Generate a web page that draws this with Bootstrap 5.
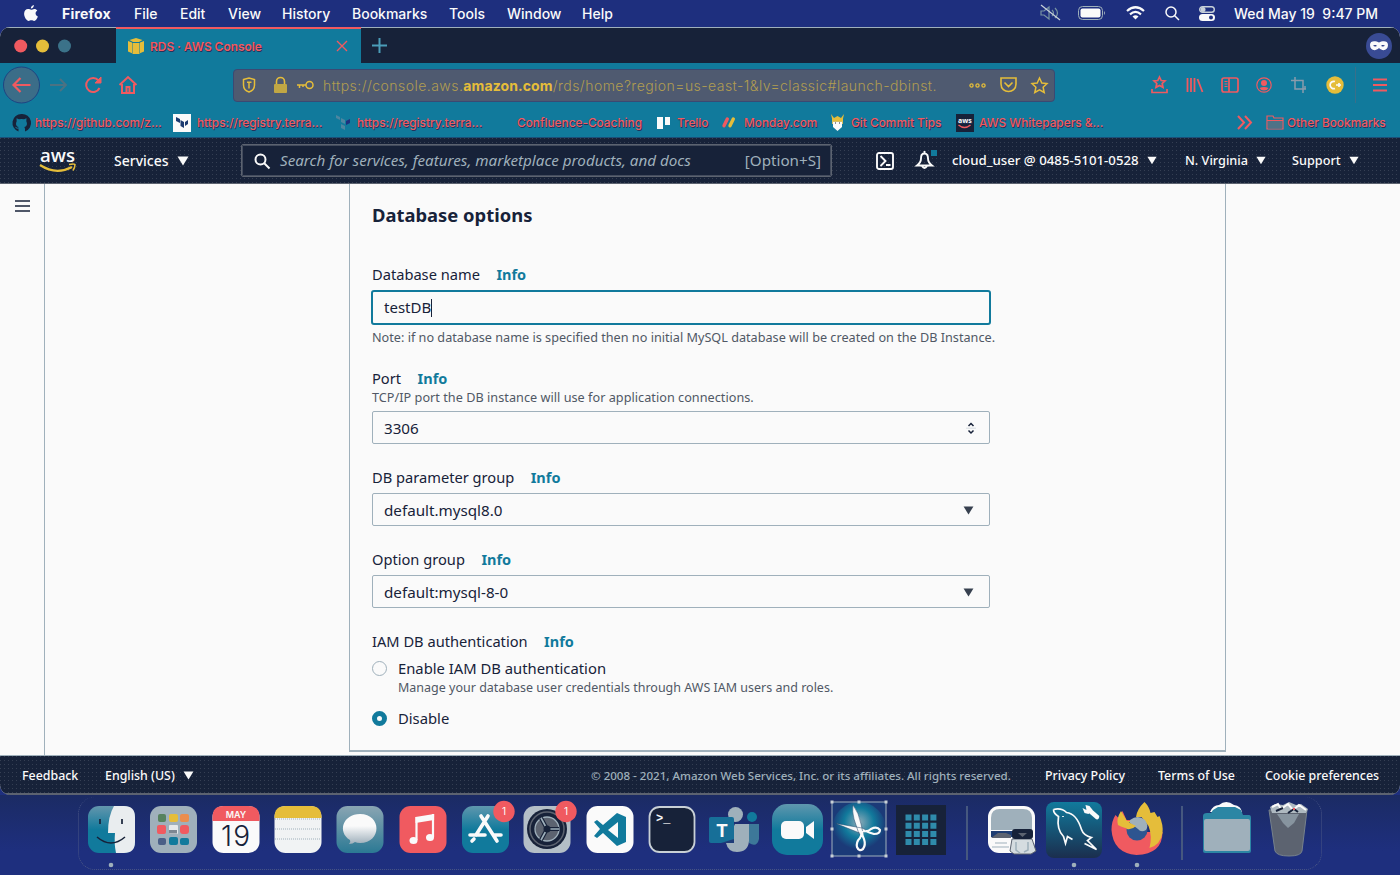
<!DOCTYPE html>
<html lang="en">
<head>
<meta charset="utf-8">
<title>RDS · AWS Console</title>
<link href="https://cdn.jsdelivr.net/npm/bootstrap@5.3.0/dist/css/bootstrap.min.css" rel="stylesheet">
<style>
:root{--ink:#172239;--blue:#1e2f7e;--teal:#117a9c;--red:#f05a60;--gold:#e5bd3a;--slate:#5c6370;--mist:#9fb0bb;--paper:#fafafa}
body{width:1400px;height:875px;overflow:hidden;background:var(--blue);font-family:"Noto Sans","Open Sans",sans-serif;color:var(--ink)}
svg{display:block;overflow:visible}
.barrow{display:grid;align-items:center;white-space:nowrap}
.menubar{height:27px;color:#fafafa;font:500 14px/25px Inter,sans-serif;grid-template-columns:62px 72px 46px 48px 54px 70px 97px 58px 75px 458px 38px 48px 39px 34px 35px 1fr;padding-bottom:1px}
.menubar .fw-bold{letter-spacing:.2px}
.browser{height:768px;border-radius:10px;overflow:hidden;background:var(--paper)}
.tabs{height:36px;background:var(--ink);border-top:1px solid var(--mist);grid-template-columns:116px 245px 36px 1fr 34px}
.tab-active{height:36px;margin-top:-1px;background:var(--teal);border-top:2px solid var(--red);grid-template-columns:34px 186px 1fr;font:600 12px Inter,sans-serif;letter-spacing:-.05px;color:var(--red);text-shadow:1px 1px 0 #23345c}
.toolbar-ff{height:44px;background:var(--teal);grid-template-columns:43px 35px 35px 120px 822px 96px 35px 35px 35px 35px 35px 29px 1fr}
.urlbar{height:33px;border:1px solid #3b4973;border-radius:4px;background:#4f5a70;grid-template-columns:31px 31px 27px 622px 31px 31px 1fr;color:var(--gold)}
.urltext{font:300 14px Inter,sans-serif;letter-spacing:.46px;color:#b19d50;overflow:hidden}
.urltext b{font-weight:700;letter-spacing:.1px;color:var(--gold)}
.tb-sep{border-left:1px solid #3a6f8a;height:36px;padding-left:17px}
.marks{height:31px;background:var(--teal);border-bottom:1px solid #1b4f78;font:500 11.85px/16px Inter,sans-serif;color:var(--red);text-shadow:1px 1px 0 #22325c;padding-top:1px;grid-template-columns:35px 138px 24px 138px 22px 160px 139px 21px 44px 23px 87px 20px 105px 23px 259px 28px 21px 1fr}
.speck{background-color:var(--ink);background-image:radial-gradient(circle at .5px .5px,#353f53 .7px,transparent .75px);background-size:4px 4px}
.awsbar{height:46px;border-bottom:1px solid var(--slate);color:#fafafa;font-size:13.25px;font-weight:500;grid-template-columns:114px 127px 635px 39px 37px 233px 107px 1fr}
.awsbar .svc{font-size:14px}
.awsbar .nar{font-size:12.7px}
.lift{position:relative;top:1px}
.finder{width:591px;height:33px;border:1px solid var(--slate);outline:1px solid #434c5e;outline-offset:-2px;border-radius:2px;background:var(--ink);color:var(--mist);font-size:15.2px;font-weight:400;grid-template-columns:38px 1fr auto;padding-right:10px}
.page{height:571px}
.rail{width:45px;border-right:1px solid var(--mist);padding:16px 0 0 15px}
.panel{width:877px;height:568px;margin-left:304px;border:1px solid var(--mist);border-top:0;border-bottom-width:2px;padding:19px 22px 0}
.panel h2{font-size:18.4px;line-height:24px;font-weight:700;margin:0 0 37px}
.lbl{height:20px;font-size:14.65px;line-height:20px;margin-bottom:6px;white-space:nowrap}
.lbl a{color:var(--teal);font-weight:700;font-size:14.5px;text-decoration:none;margin-left:16.5px}
.hint{height:16px;line-height:16px;font-size:12.67px;color:#505865;white-space:nowrap}
.hint.note{margin:-1px 0 23px}
.hint.tcp{margin:1px 0 6px;letter-spacing:.03px}
.hint.iam{font-size:12.5px;margin:2px 0 12px;padding-left:26px}
.field{width:618px;height:33px;border:1px solid var(--mist);border-radius:2px;padding:1px 15px 0 11px;font-size:15.2px;margin-bottom:23px}
.field.active{width:620px;height:35px;margin:0 0 5px -1px;border:2px solid var(--teal);border-radius:3px;font-size:15px;padding-top:0}
.caret{width:1px;height:18px;background:var(--ink)}
.pick{height:20px;line-height:20px;font-size:14.8px}
.pick.first{margin-top:7px}
.dot{width:15px;height:15px;border:1px solid var(--mist);border-radius:50%;margin-right:11px}
.dot.on{border:5px solid var(--teal)}
.legal{height:40px;border-top:1px solid var(--mist);border-bottom:2px solid var(--slate);color:#fafafa;font-size:12.4px;font-weight:500;grid-template-columns:22px 83px 486px 454px 113px 107px 1fr;padding-top:3px}
.legal .grey{color:var(--mist);font-size:11.57px}
.dockarea{height:80px;padding:2px 78px 0;background:linear-gradient(#1b2b64,#1e2f7e 70%)}
.dock{height:73px;border:1px dotted #4a5686;border-top:0;border-radius:17px;grid-template-columns:repeat(14,62.33px) 28px repeat(3,62.5px) 27px repeat(2,62px);padding-left:1px;align-items:start}
.dock svg{width:62px;height:73px}
.vsep{width:2px;height:54px;background:#46587f;margin:9px auto 0}
</style>
</head>
<body>
<svg width="0" height="0" class="position-absolute"><defs>
<linearGradient id="gFace" y2="1" x2="0"><stop stop-color="#6396ad"/><stop offset=".5" stop-color="#117a9c"/></linearGradient>
<linearGradient id="gMsg" y2="1" x2="0"><stop stop-color="#8aa5b3"/><stop offset="1" stop-color="#2b7994"/></linearGradient>
<linearGradient id="gBub" y2="1" x2="0"><stop offset=".4" stop-color="#fafafa"/><stop offset="1" stop-color="#9fb0bb"/></linearGradient>
<linearGradient id="gApp" y2="1" x2="0"><stop stop-color="#5f97ae"/><stop offset=".5" stop-color="#117a9c"/></linearGradient>
<linearGradient id="gWb" y2="1" x2="0"><stop stop-color="#117a9c"/><stop offset="1" stop-color="#1b2e4e"/></linearGradient>
<radialGradient id="gCut" cy=".38"><stop stop-color="#8fabb8"/><stop offset=".55" stop-color="#117a9c"/><stop offset="1" stop-color="#1b3a78"/></radialGradient>
<symbol id="tri" viewBox="0 0 12 10"><path d="M.5 .5h11L6 9.5z" fill="currentColor"/></symbol>
</defs></svg>

<nav class="menubar barrow">
<svg width="14" height="17" viewBox="0 0 14 17" class="ms-4"><path d="M9.900 0c.1 1.800-1.300 3.500-3 3.500C6.700 1.800 8.200.3 9.900 0zM7.200 4.700c.8 0 1.700-.8 3.100-.8 1.300 0 2.400.6 3 1.600-2.500 1.600-2.200 4.900.6 6-.7 2-2.200 4.500-3.700 4.500-1.100 0-1.500-.7-2.800-.7s-1.800.7-2.800.7C2.900 16 .1 12.300.1 8.800.1 5.700 2 4 4 4c1.400 0 2.300.7 3.200.7z" fill="#fafafa"/></svg>
<span class="fw-bold">Firefox</span><span>File</span><span>Edit</span><span>View</span><span>History</span><span>Bookmarks</span><span>Tools</span><span>Window</span><span>Help</span>
<svg width="21" height="16" viewBox="0 0 21 16" fill="none" stroke="#7894a3" stroke-width="1.200"><path d="M1 6h3l5-4v12l-5-4H1zM12 5q3 3 0 6M15 3q5 5 0 10"/><path d="M1 0l19 15" stroke="#c8d1d9"/></svg>
<svg width="28" height="14" viewBox="0 0 28 14"><rect x=".5" y=".5" width="24" height="13" rx="4" fill="none" stroke="#9fb0bb"/><rect x="2.500" y="2.500" width="20" height="9" rx="2" fill="#fafafa"/><path d="M26 5q2 2 0 4z" fill="#9fb0bb"/></svg>
<svg width="19" height="14" viewBox="0 0 19 14" fill="none" stroke="#fafafa" stroke-width="2.200"><path d="M1 5q8.500-7.500 17 0M4 8.300q5.500-4.800 11 0"/><path d="M6.500 10.500q3-2.500 6 0l-3 3z" fill="#fafafa" stroke="none"/></svg>
<svg width="15" height="15" viewBox="0 0 15 15" fill="none" stroke="#fafafa" stroke-width="1.500"><circle cx="6" cy="6" r="5"/><path d="M9.500 9.500l4.500 4.500"/></svg>
<svg width="16" height="15" viewBox="0 0 16 15"><rect x=".7" y=".7" width="14.600" height="5.600" rx="2.800" fill="none" stroke="#c8d1d9" stroke-width="1.400"/><circle cx="4" cy="3.500" r="2.500" fill="#c8d1d9"/><rect y="8" width="16" height="7" rx="3.500" fill="#fafafa"/><circle cx="12" cy="11.500" r="2" fill="#1e2f7e"/></svg>
<span>Wed May 19&nbsp; 9:47 PM</span>
</nav>

<main class="browser">
<header class="tabs barrow">
<svg width="80" height="16" viewBox="0 0 80 16"><circle cx="20.700" cy="8" r="6.500" fill="#f05a60"/><circle cx="42.500" cy="8" r="6.500" fill="#e5bd3a"/><circle cx="64.500" cy="8" r="6.500" fill="#3b7289"/></svg>
<div class="tab-active barrow">
<svg class="ms-2 ps-1" width="20" height="16" viewBox="0 0 16 16"><path d="M0 3l4 1.500v10.800L0 13.500zM4.500 5h7v11h-7zM12 4.500L16 3v10.500l-4 1.800z" fill="#e5bd3a"/><path d="M1.500 2L8 0l6.500 2L11 4H5z" fill="#e5bd3a"/></svg>
<span>RDS · AWS Console</span>
<svg width="12" height="12" viewBox="0 0 12 12" stroke="#f05a60" stroke-width="1.400"><path d="M1 1l10 10M11 1L1 11"/></svg>
</div>
<svg class="mx-auto" width="15" height="15" viewBox="0 0 15 15" stroke="#4b9db9" stroke-width="2"><path d="M7.500 0v15M0 7.500h15"/></svg><span></span>
<svg width="26" height="26" viewBox="0 0 26 26"><circle cx="13" cy="13" r="13" fill="#394b94"/><path d="M4 12c0-5 6-4 9-2.500 3-1.500 9-2.500 9 2.500s-5 7-9 3c-4 4-9 2-9-3z" fill="#fafafa"/><path d="M7 12.700q2.500-1.500 4 .3-2 1-4-.3zm12 0q-2.500-1.500-4 .3 2 1 4-.3z" fill="#1e2f7e"/></svg>
</header>

<div class="toolbar-ff barrow">
<svg width="42" height="38" viewBox="0 0 42 38"><circle cx="21.500" cy="19" r="18" fill="#3b6d88" stroke="#1e4482"/><path d="M30.500 19h-17m7-7l-7 7 7 7" fill="none" stroke="#f05a60" stroke-width="2.200"/></svg>
<svg width="24" height="18" viewBox="0 0 24 18" class="ms-1" fill="none" stroke="#4b7283" stroke-width="2"><path d="M3 9h16m-6-6l6 6-6 6"/></svg>
<svg class="ms-1" width="22" height="18" viewBox="0 0 22 18" fill="none" stroke="#f05a60" stroke-width="2"><path d="M16.500 4.500A7 7 0 1 0 17.500 12"/><path d="M19 1v6h-6z" fill="#f05a60" stroke-width="1"/></svg>
<svg class="ms-1" width="22" height="18" viewBox="0 0 22 18" fill="none" stroke="#f05a60" stroke-width="2"><path d="M2.500 9L11 1l8.500 8M5 8v9h12V8M9.500 17v-6h3v6"/></svg>
<div class="urlbar barrow">
<svg class="ms-2" width="14" height="16" viewBox="0 0 14 16" fill="none" stroke="currentColor" stroke-width="1.500"><path d="M1.500 2.500L7 1l5.500 1.500V8c0 4-2.500 6-5.500 7-3-1-5.500-3-5.500-7z"/><path d="M7 4.500v7M5 5.200h4.500"/></svg>
<svg class="ms-2" width="15" height="16" viewBox="0 0 15 16"><path d="M3.500 8V4.500a4 4 0 0 1 8 0V8" fill="none" stroke="currentColor" stroke-width="1.600"/><rect x="1" y="7" width="13" height="9" rx="1" fill="#c1a744"/></svg>
<svg width="18" height="10" viewBox="0 0 18 10" fill="none" stroke="currentColor" stroke-width="1.500"><circle cx="13.500" cy="5" r="3.500"/><path d="M10 5H1M3.500 5v3M7 5v2"/></svg>
<span class="urltext">https://console.aws.<b>amazon.com</b>/rds/home?region=us-east-1&amp;lv=classic#launch-dbinst.</span>
<svg class="ms-4" width="17" height="5" viewBox="0 0 17 5" fill="none" stroke="currentColor" stroke-width="1.300"><circle cx="2.500" cy="2.500" r="1.600"/><circle cx="8.500" cy="2.500" r="1.600"/><circle cx="14.500" cy="2.500" r="1.600"/></svg>
<svg class="ms-4" width="17" height="16" viewBox="0 0 17 16" fill="none" stroke="currentColor" stroke-width="1.600"><path d="M1 1h15v6c0 10-15 10-15 0zM4.500 5.500l4 4 4-4"/></svg>
<svg class="ms-4" width="17" height="17" viewBox="0 0 17 17" fill="none" stroke="currentColor" stroke-width="1.500"><path d="M8.500 1l2.300 5 5.200.6-3.900 3.600 1.100 5.300-4.700-2.700-4.700 2.700 1.100-5.300L1 6.600 6.200 6z"/></svg>
</div>
<span></span>
<svg width="17" height="18" viewBox="0 0 17 18" fill="none" stroke="#f05a60" stroke-width="1.700"><path d="M8.500 1l1.700 3.500 3.800.4-2.800 2.600.8 3.800-3.500-1.900L5 11.300l.8-3.800L3 4.900l3.800-.4zM1 13v3.500h15V13"/></svg>
<svg width="18" height="16" viewBox="0 0 18 16" stroke="#f05a60" stroke-width="1.800"><path d="M1.500 1v14M5 1v14M8.500 1v14M11.500 2l5 13"/></svg>
<svg width="18" height="16" viewBox="0 0 18 16" fill="none" stroke="#f05a60" stroke-width="1.700"><rect x="1" y="1" width="16" height="14" rx="2"/><path d="M8 1v14"/><path d="M3.500 4.500h3M3.500 7h3M3.500 9.500h3" stroke-width="1.200"/></svg>
<svg width="16" height="16" viewBox="0 0 16 16"><circle cx="8" cy="8" r="7.200" fill="none" stroke="#f05a60" stroke-width="1.200"/><circle cx="8" cy="6" r="3" fill="#f05a60"/><path d="M3.500 11q4.500-2 9 0-1.500 2.500-4.500 2.500t-4.500-2.500z" fill="#f05a60"/></svg>
<svg width="16" height="16" viewBox="0 0 16 16" fill="none" stroke="#8a9cac" stroke-width="1.500"><path d="M4 0v12h11M0 3.500h12V16M14 9v3"/></svg>
<svg width="18" height="18" viewBox="0 0 18 18"><circle cx="9" cy="9" r="8.700" fill="#e5bd3a"/><path d="M9 5.500a3.700 3.700 0 1 0 0 7M10 9h5m-2-2v4" fill="none" stroke="#fafafa" stroke-width="1.700"/></svg>
<div class="tb-sep d-flex align-items-center"><svg width="15" height="14" viewBox="0 0 15 14" stroke="#f05a60" stroke-width="1.900"><path d="M0 1.500h14M0 7h14M0 12.500h14"/></svg></div>
</div>

<div class="marks barrow">
<svg class="ms-2 ps-1" width="23" height="18" viewBox="0 0 18 18"><path d="M9 0a9 9 0 0 0-3 17.500v-3c-2 .5-3-.5-3.300-1.800 1.200.3 1.600 1 2.300 1 .6 0 1-.3 1.200-.8C3.300 12.500 3 9.500 4.200 7.200L4 4.200l2.500 1q2.500-.6 5 0l2.500-1-.2 3c1.200 2.300.9 5.300-2 5.700.5.7.7 1.200.7 2.100v2.500A9 9 0 0 0 9 0z" fill="#172239"/></svg>
<span>https://github.com/z...</span>
<svg width="18" height="18" viewBox="0 0 18 18"><rect width="18" height="18" fill="#fafafa"/><path d="M3 3l4 2v4L3 7zM7.500 6L11 8v6l-3.500-2zM12 8l3-2v4l-3 2z" fill="#1b3a70"/></svg>
<span>https://registry.terra...</span>
<svg width="18" height="17" viewBox="0 0 18 17"><path d="M1 1l4 2v3L1 4zM6 4l4 2v4L6 8zM6 10l4 2v4l-4-2z" fill="#4d86a0"/><path d="M11 7l4-2v4l-4 2z" fill="#1e2f7e"/></svg>
<span>https://registry.terra...</span><span>Confluence-Coaching</span>
<svg width="14" height="13" viewBox="0 0 14 13"><path d="M1 1h6v12H1zM9 1h5v8H9z" fill="#fafafa"/></svg>
<span>Trello</span>
<svg width="14" height="11" viewBox="0 0 14 11" stroke-linecap="round" stroke-width="3.400"><path d="M3 8.700L6.300 2" stroke="#f05a60"/><path d="M9 8.700L12.300 2" stroke="#e5bd3a"/></svg>
<span>Monday.com</span>
<svg width="13" height="17" viewBox="0 0 13 17"><path d="M1 5h11v5H1z" fill="#d7bf65"/><path d="M0 0l3 4 3.500-2L10 4l3-4-1.500 7h-10z" fill="#e5bd3a"/><path d="M2 8h9v5l-4.500 4L2 13z" fill="#fafafa"/><path d="M4 9h1m3 0h1" stroke="#172239"/></svg>
<span>Git Commit Tips</span>
<svg width="18" height="18" viewBox="0 0 18 18"><rect width="18" height="18" fill="#172239"/><text x="2" y="9" font-family="Noto Sans" font-weight="700" font-size="7" fill="#fafafa">aws</text><path d="M2.500 11q6 5 12 0" fill="none" stroke="#f05a60" stroke-width="1.500"/></svg>
<span>AWS Whitepapers &amp;...</span>
<svg width="15" height="13" viewBox="0 0 15 13" fill="none" stroke="#f05a60" stroke-width="2"><path d="M0 0l6 6.500L0 13M7 0l6 6.500L7 13"/></svg>
<svg width="18" height="15" viewBox="0 0 18 15" fill="none" stroke="#f05a60" stroke-width="1.200"><path d="M1 14V1h6l1 2h9v11z"/><path d="M2 6h14v7.500H2z" fill="#4f7287" stroke="none"/><path d="M1 5.500h16"/></svg>
<span>Other Bookmarks</span>
</div>

<div class="awsbar barrow speck">
<svg class="ms-auto" width="74" height="26" viewBox="0 0 74 26"><text x="0" y="14" font-family="Open Sans" font-weight="600" font-size="18" textLength="35" lengthAdjust="spacingAndGlyphs" fill="#fafafa">aws</text><path d="M0 17q16 10.500 32 2" fill="none" stroke="#e5bd3a" stroke-width="2.200"/><path d="M29 16.500q5-1 6 0 0 3-2 6" fill="none" stroke="#e5bd3a" stroke-width="1.500"/></svg>
<span class="svc d-flex align-items-center gap-2">Services <svg width="12" height="10"><use href="#tri"/></svg></span>
<div class="finder barrow">
<svg class="ms-2 ps-1" width="20" height="16" viewBox="0 0 16 16" fill="none" stroke="#fafafa" stroke-width="2"><circle cx="6.500" cy="6.500" r="5"/><path d="M10 10l5.500 5.500"/></svg>
<em>Search for services, features, marketplace products, and docs</em><span>[Option+S]</span>
</div>
<svg width="18" height="18" viewBox="0 0 18 18" fill="none" stroke="#fafafa" stroke-width="1.900"><rect x="1" y="1" width="16" height="16" rx="2"/><path d="M4.500 4l5 5-5 5M10 13h4.500"/></svg>
<svg width="22" height="20" viewBox="0 0 22 20"><path d="M2 14.500q4-3 4-7 0-5 3.500-5t3.500 5q0 4 4 7zM7 15q2.500 4 5 0M9.500 0v3" fill="none" stroke="#fafafa" stroke-width="1.900"/><path d="M16-1h6v6h-6z" fill="#117a9c"/></svg>
<span class="d-flex align-items-center gap-2">cloud_user @ 0485-5101-0528 <svg width="10" height="9"><use href="#tri"/></svg></span>
<span class="nar d-flex align-items-center gap-2">N. Virginia <svg width="10" height="9"><use href="#tri"/></svg></span>
<span class="nar d-flex align-items-center gap-2">Support <svg width="10" height="9"><use href="#tri"/></svg></span>
</div>

<section class="page d-flex">
<aside class="rail"><svg width="15" height="12" viewBox="0 0 15 12" stroke="#172239" stroke-width="1.600"><path d="M0 1h15M0 6h15M0 11h15"/></svg></aside>
<div class="panel">
<h2>Database options</h2>
<div class="lbl">Database name<a href="#">Info</a></div>
<div class="field active d-flex align-items-center"><span>testDB</span><span class="caret"></span></div>
<div class="hint note">Note: if no database name is specified then no initial MySQL database will be created on the DB Instance.</div>
<div class="lbl mb-0">Port<a href="#">Info</a></div>
<div class="hint tcp">TCP/IP port the DB instance will use for application connections.</div>
<div class="field d-flex align-items-center justify-content-between"><span>3306</span><svg width="6" height="13" viewBox="0 0 6 13" fill="none" stroke="#172239" stroke-width="1.500"><path d="M.5 4L3 1.500 5.500 4M.5 8.500L3 11l2.500-2.500"/><path d="M-1.500 6.200h9" stroke="#9fb0bb" stroke-width=".8" stroke-dasharray="1 1"/></svg></div>
<div class="lbl">DB parameter group<a href="#">Info</a></div>
<div class="field d-flex align-items-center justify-content-between"><span>default.mysql8.0</span><svg width="11" height="9" color="#37404f"><use href="#tri"/></svg></div>
<div class="lbl">Option group<a href="#">Info</a></div>
<div class="field d-flex align-items-center justify-content-between"><span>default:mysql-8-0</span><svg width="11" height="9" color="#37404f"><use href="#tri"/></svg></div>
<div class="lbl mb-0">IAM DB authentication<a href="#">Info</a></div>
<div class="pick first d-flex align-items-center"><span class="dot"></span>Enable IAM DB authentication</div>
<div class="hint iam">Manage your database user credentials through AWS IAM users and roles.</div>
<div class="pick d-flex align-items-center"><span class="dot on"></span>Disable</div>
</div>
</section>

<footer class="legal barrow speck">
<span></span><span>Feedback</span><span class="d-flex align-items-center gap-2">English (US) <svg width="11" height="9"><use href="#tri"/></svg></span><span class="grey">© 2008 - 2021, Amazon Web Services, Inc. or its affiliates. All rights reserved.</span><span>Privacy Policy</span><span>Terms of Use</span><span>Cookie preferences</span>
</footer>
</main>

<div class="dockarea">
<div class="dock barrow">
<svg viewBox="0 0 62 73"><rect x="8" y="9" width="47" height="47" rx="11" fill="url(#gFace)"/><path d="M34 9h10q11 0 11 11v25q0 11-11 11H36q-2-9-1-20h-7q0-17 6-27z" fill="#e9edef"/><path d="M20 22v5M42 22v5" stroke="#172239" stroke-width="1.700"/><path d="M17 40q14 12 28 0" fill="none" stroke="#172239" stroke-width="1.500"/><circle cx="31" cy="68" r="2.300" fill="#9fb0bb"/></svg>
<svg viewBox="0 0 62 73"><rect x="8" y="9" width="47" height="47" rx="11" fill="#9fb0bb"/><g fill="#117a9c"><rect x="16" y="17" width="8" height="8" rx="2" fill="#56825e"/><rect x="27" y="17" width="9" height="8" rx="2" fill="#e5bd3a"/><rect x="38" y="17" width="9" height="8" rx="2" fill="#ea8d4d"/><rect x="15" y="28" width="9" height="9" rx="2" fill="#f05a60"/><rect x="27" y="28" width="9" height="9" rx="1" fill="#e5e9eb"/><path d="M27 33h8v3.500h-8z" fill="#7c8792"/><rect x="38" y="28" width="9" height="9" rx="3" fill="#f05a60"/><rect x="16" y="41" width="8" height="7" rx="2" fill="#4a5f87"/><rect x="27" y="40" width="9" height="8" rx="2"/><rect x="38" y="41" width="9" height="7" rx="2"/></g></svg>
<svg viewBox="0 0 62 73"><rect x="7.500" y="9" width="47" height="47" rx="11" fill="#fafafa"/><path d="M7.500 24v-4q0-11 11-11h25q11 0 11 11v4z" fill="#f05a60"/><text x="31" y="20.500" text-anchor="middle" font-family="Inter" font-weight="600" font-size="9" fill="#fafafa">MAY</text><text x="30.500" y="49" text-anchor="middle" font-family="Inter" font-weight="300" font-size="28" textLength="29" fill="#172239">19</text></svg>
<svg viewBox="0 0 62 73"><rect x="7.500" y="9" width="47" height="47" rx="11" fill="#f1f3f4"/><path d="M7.500 21v-1q0-11 11-11h25q11 0 11 11v1z" fill="#e5bd3a"/><path d="M8 22h46M8 32h46M8 42h46" stroke="#9fb0bb" stroke-dasharray="1 1"/></svg>
<svg viewBox="0 0 62 73"><rect x="7.500" y="9" width="47" height="47" rx="11" fill="url(#gMsg)"/><path d="M31 17c22 0 22 29 0 29q-3 0-5-1-2 2-6 2 2-2 1-4c-13-8-7-26 10-26z" fill="url(#gBub)"/></svg>
<svg viewBox="0 0 62 73"><rect x="7.500" y="9" width="47" height="47" rx="11" fill="#f05a60"/><path d="M24.500 43V20M41 40V17" fill="none" stroke="#fafafa" stroke-width="2.200"/><path d="M23.500 20l18.600-3v6l-18.600 3z" fill="#fafafa"/><ellipse cx="21.500" cy="43.500" rx="4" ry="3.500" fill="#fafafa"/><ellipse cx="38" cy="40.500" rx="4" ry="3.500" fill="#fafafa"/></svg>
<svg viewBox="0 0 62 73"><rect x="8" y="9" width="47" height="47" rx="11" fill="url(#gApp)"/><path d="M34 19L22 38M27 19l16 25M16 38h15m9 0h7M20 42l-2 2" fill="none" stroke="#fafafa" stroke-width="3.600" stroke-linecap="round"/><circle cx="50" cy="14.500" r="10.700" fill="#f05a60"/><text x="50" y="18" text-anchor="middle" font-family="Inter" font-size="10" fill="#fafafa">1</text></svg>
<svg viewBox="0 0 62 73"><rect x="7.500" y="9" width="47" height="47" rx="11" fill="#b4bfc7"/><circle cx="31" cy="32" r="20" fill="#172239"/><circle cx="31" cy="32" r="17" fill="none" stroke="#5c6370" stroke-width="1.500"/><circle cx="31" cy="32" r="12" fill="#5c6370" stroke="#9fb0bb" stroke-width="1.300"/><path d="M31 32h12M31 32l-6 11M31 32l-6-11" stroke="#172239" stroke-width="4"/><path d="M31 32h12M31 32l-6 11M31 32l-6-11" stroke="#9fb0bb" stroke-width="1.600"/><circle cx="31" cy="32" r="3.500" fill="#172239"/><circle cx="50" cy="14.500" r="10.700" fill="#f05a60"/><text x="50" y="18" text-anchor="middle" font-family="Inter" font-size="10" fill="#fafafa">1</text></svg>
<svg viewBox="0 0 62 73"><rect x="7.500" y="9" width="47" height="47" rx="11" fill="#fafafa"/><path d="M38 16l9 4v25l-9 4-14-13-6 5-3-2 6-7-6-7 3-2 6 5zM39 25l-10 8 10 8z" fill="#117a9c" fill-rule="evenodd"/></svg>
<svg viewBox="0 0 62 73"><rect x="8.500" y="10" width="45" height="45" rx="10" fill="#172239" stroke="#c8d0d6" stroke-width="1.800"/><text x="15" y="25" font-family="Liberation Mono" font-size="12" font-weight="700" fill="#fafafa">&gt;_</text></svg>
<svg viewBox="0 0 62 73"><circle cx="32.500" cy="17.500" r="7.500" fill="#9fb0bb"/><circle cx="49" cy="20" r="5" fill="#117a9c"/><path d="M43 27h13v15q-2 9-10 4z" fill="#3d7899"/><path d="M32 27h14v17q-1 11-12 11-9 0-11-9z" fill="#9fb0bb"/><rect x="6" y="20" width="25" height="26" rx="2" fill="#176f98"/><path d="M31 22v24H18l13-4z" fill="#1e3c78"/><text x="19" y="40" text-anchor="middle" font-family="Inter" font-weight="700" font-size="18" fill="#fafafa">T</text></svg>
<svg viewBox="0 0 62 73"><rect x="6" y="7" width="51" height="51" rx="15" fill="url(#gApp)"/><rect x="15" y="24" width="23" height="18" rx="5" fill="#fafafa"/><path d="M40 30l8-6v18l-8-6z" fill="#fafafa"/></svg>
<svg viewBox="0 0 62 73"><rect x="4" y="5" width="54" height="54" fill="#1b3a78"/><circle cx="31" cy="32" r="27" fill="url(#gCut)"/><rect x="4" y="5" width="54" height="54" fill="none" stroke="#9fb0bb"/><path d="M8 26.500L34 31l4 2-4 4zM25 8q6 8 8 19l2 9-4 1-5-15q-2-8-1-14z" fill="#fafafa" stroke="#23476a" stroke-width=".5"/><g fill="none" stroke="#fafafa" stroke-width="2.200"><path d="M35 34q5 1 8-2 6-3 9 1 0 4-6 4-4-1-8-3"/><path d="M34 34q0 5 2 8 2 6-1 10-4 3-6-2-1-5 3-9 2-3 1-6"/></g><path d="M2.500 3.500h3v3h-3zm27 0h3v3h-3zm27 0h3v3h-3zm0 27h3v3h-3zm0 27h3v3h-3zm-27 0h3v3h-3zm-27 0h3v3h-3zm0-27h3v3h-3z" fill="#c8d0d6"/></svg>
<svg viewBox="0 0 62 73"><rect x="6" y="8" width="50" height="50" fill="#172239"/><g stroke="#2f8bab" stroke-width="6" stroke-dasharray="6 2.300"><path d="M15.500 20.500h31M15.500 28.700h31M15.500 36.900h31M15.500 45.100h31"/></g></svg>
<span class="vsep"></span>
<svg viewBox="0 0 62 73"><rect x="7" y="9" width="47" height="47" rx="11" fill="#fafafa"/><path d="M10 33V21q0-9 9-9h23q9 0 9 9v12z" fill="#9fb0bb"/><path d="M10 34h41v6H10z" fill="#1e3d72"/><path d="M10 41h20v-3l-5-2h-8z" fill="#5c6370"/><path d="M11 50h17M14 46h12" stroke="#9fb0bb"/><path d="M31 42h20l4 12-5 3H33l-4-3z" fill="#d5dce0" stroke="#5c6370"/><rect x="31" y="32" width="21" height="10" rx="3" fill="#172239"/><path d="M37 36h9l-4.500 4z" fill="#5c6370"/><path d="M35 45v8l4 3m8-11v8l-4 2" stroke="#9fb0bb" fill="none" stroke-width="1.500"/></svg>
<svg viewBox="0 0 62 73"><rect x="3" y="5" width="56" height="56" rx="8" fill="url(#gWb)"/><path d="M10.500 12.500q8-2 13 3 10 1 15 17 2 6 10 8l-4 3 9 9-12-6M10.500 12.500q0 4 5 7-2 13 5 20l2 7 2-7 5 3M20 19v1" fill="none" stroke="#fafafa" stroke-width="1.700"/><path d="M46 13l8 7" stroke="#fafafa" stroke-width="4.500" stroke-linecap="round"/><path d="M42.500 8l4 1 3 4-4 4-4-1-2-5 4 2z" fill="#fafafa"/><circle cx="31" cy="68" r="2.300" fill="#9fb0bb"/></svg>
<svg viewBox="0 0 62 73"><path d="M5.500 33q0-9 4-15l3 3 4-7 4 9h8l4 12h24q0 22-26 23Q7 56 5.500 33z" fill="#f05a60"/><path d="M30 20q1-8 8.500-15 5 5 6 11l4-1 3 5 2-1q4 9 3 17-2 12-13 15 3-12-1-22l-7-9z" fill="#e5bd3a"/><path d="M12 28q-2-6 3-14l6 10h5l7 7q-13 2-21-3z" fill="#e5bd3a"/><circle cx="31" cy="33" r="10.500" fill="#2e5590"/><path d="M24 23q8-6 15 0 4 6 1 10-5 3-8-1l-8-6z" fill="#9fb0bb"/><path d="M12 24q7 2 12 2l6 3q-4 4-9 3z" fill="#e5bd3a"/><circle cx="31" cy="68" r="2.300" fill="#9fb0bb"/></svg>
<span class="vsep"></span>
<svg viewBox="0 0 62 73"><path d="M15 15q3-7 9-7 7-6 15 0 7 1 8 7z" fill="#fafafa"/><path d="M8 54V19q0-3 4-3h4l2-3 5-3h17l6 3 2 5h6q2 0 2 3v33q0 2-2 2H10q-2 0-2-2z" fill="#2c86a4"/><rect x="9" y="22" width="46" height="32" rx="2" fill="#9fb0bb"/></svg>
<svg viewBox="0 0 62 73"><path d="M12 13h38l-5 41q-1 5-13 5t-14-5z" fill="#5c6370" stroke="#77828c"/><path d="M13 10l5-3 8 1 6-3 7 3 5-1 7 5-2 4H15z" fill="#aeb9c0"/><path d="M15 10l6-3 3 5 7-5 5 6 6-5 7 5" fill="none" stroke="#fafafa" stroke-width="2"/><path d="M19 14l7-3m5 5l6-4 4 3" stroke="#172239" fill="none" stroke-width="2"/><path d="M20 17h22l-5 9-6 5-5-5z" fill="#87949f"/><path d="M36 12h2" stroke="#f05a60" stroke-width="2"/></svg>
</div>
</div>
<script src="https://cdn.jsdelivr.net/npm/bootstrap@5.3.0/dist/js/bootstrap.bundle.min.js"></script>
</body>
</html>
